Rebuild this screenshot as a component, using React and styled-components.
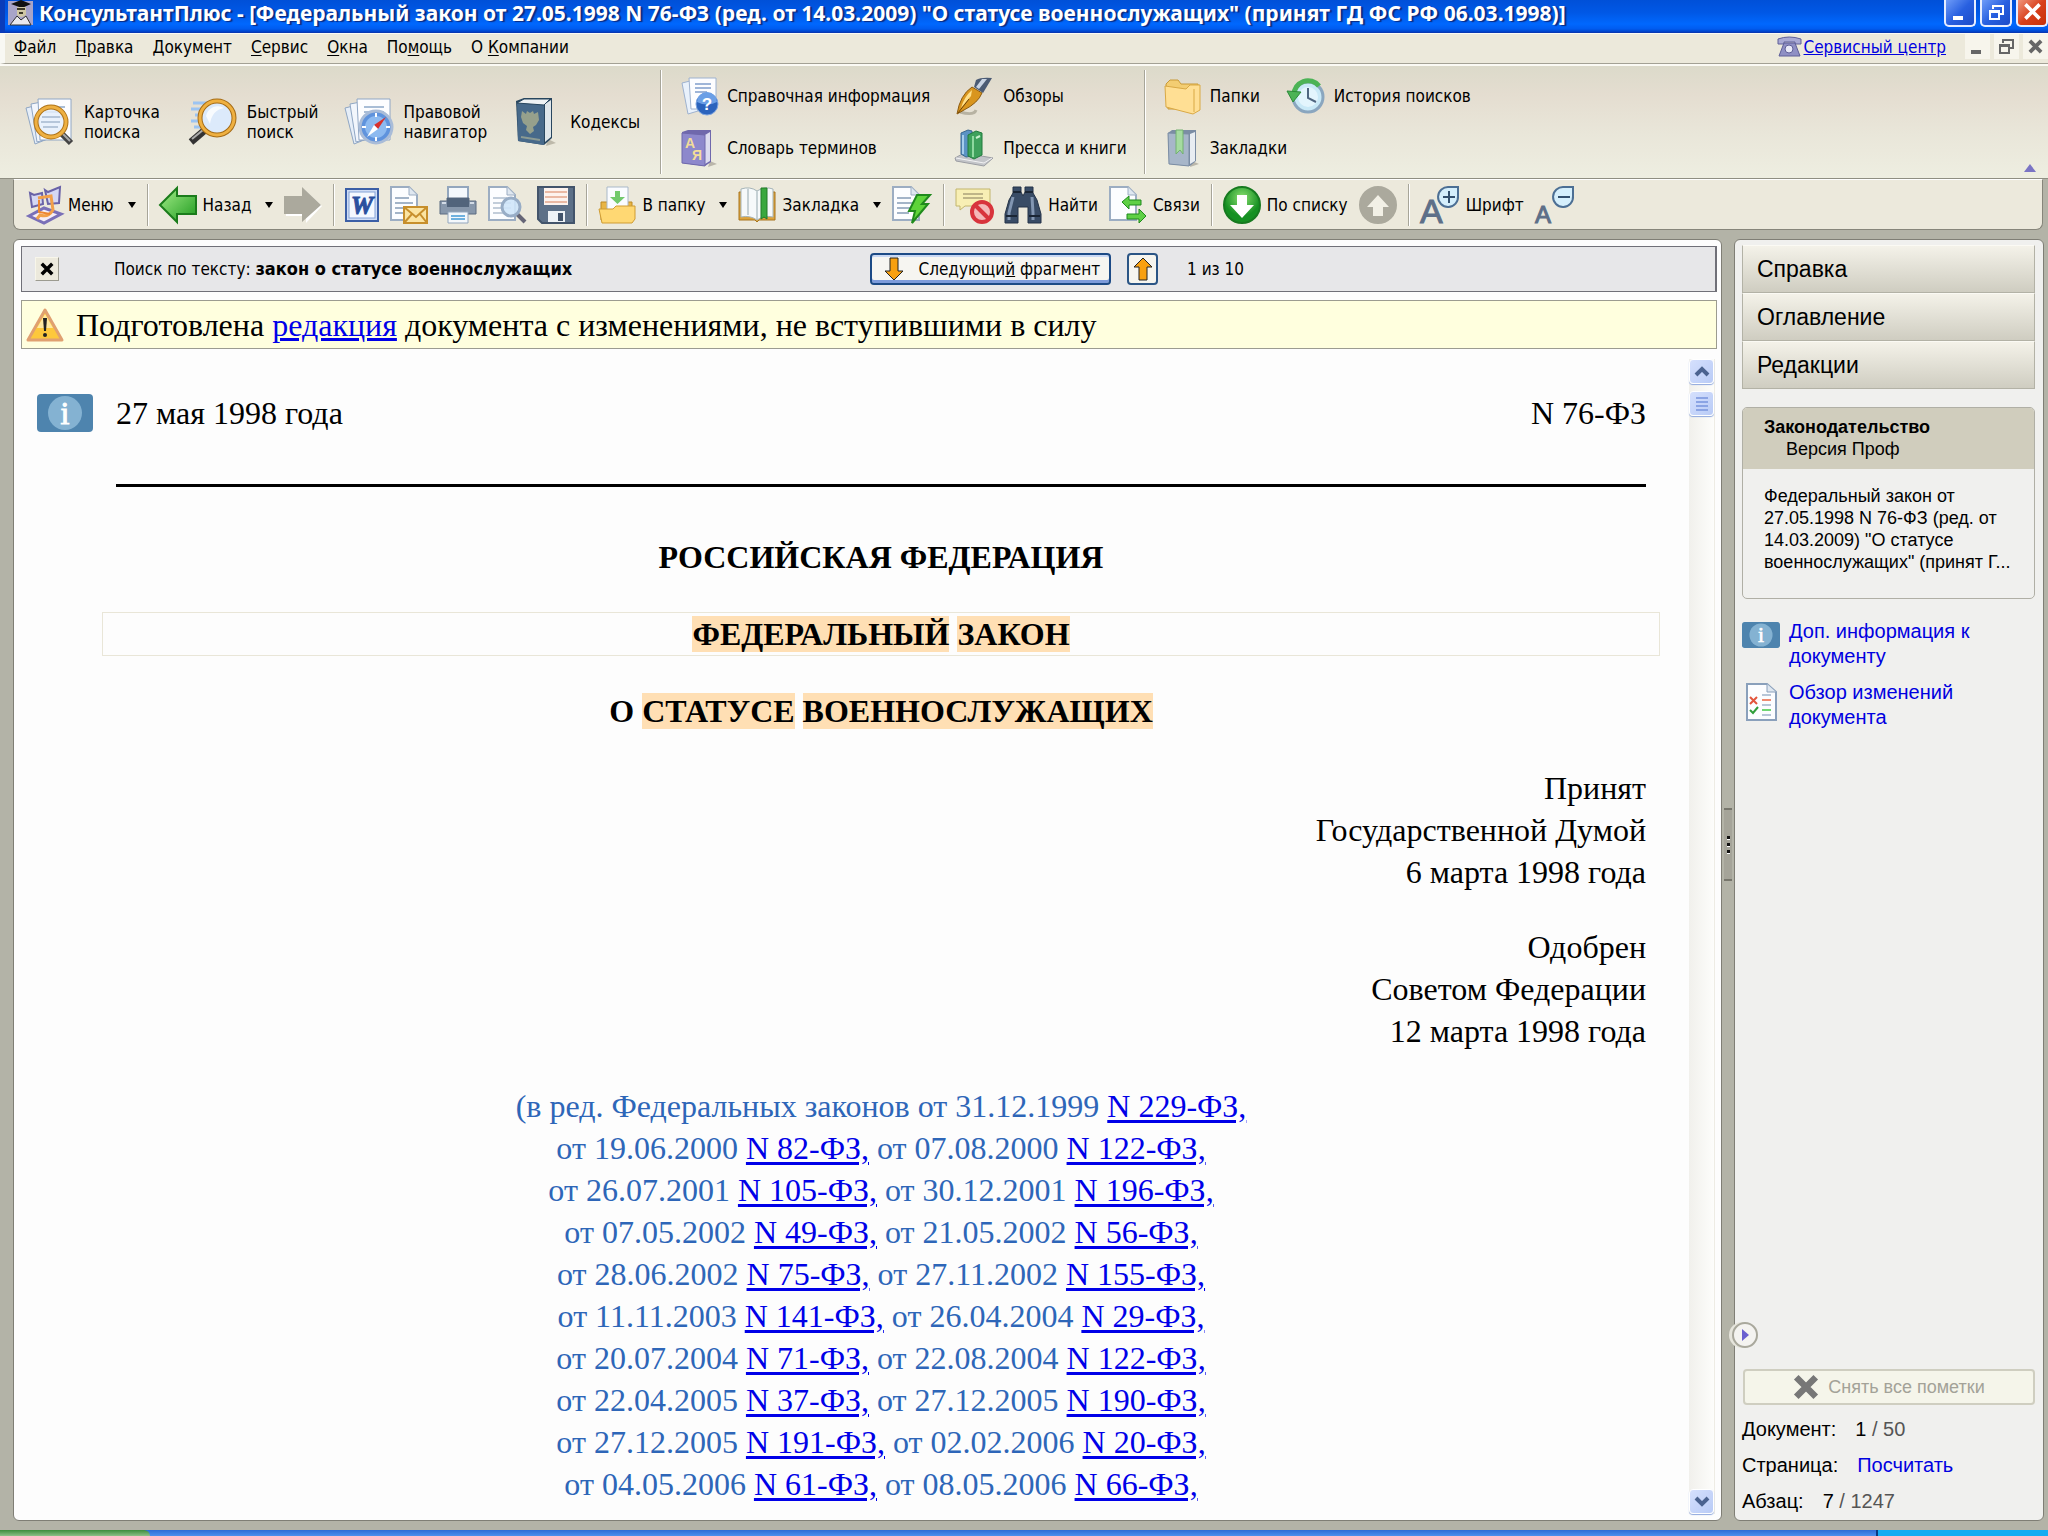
import React from "react";
import styled, { createGlobalStyle } from "styled-components";

const ui = '"DejaVu Sans Condensed", "DejaVu Sans", sans-serif';
const arial = '"Liberation Sans", Arial, sans-serif';
const serif = '"Liberation Serif", "Times New Roman", serif';

const GlobalStyle = createGlobalStyle`
  * { box-sizing: border-box; }
  body { margin: 0; background: #b3b3a7; }
  button { margin: 0; padding: 0; border: 0; background: none; color: inherit; font: inherit; cursor: pointer; }
  svg { display: block; flex: none; overflow: visible; }
`;

/* ---------- window frame ---------- */

const Window = styled.div`
  display: flex;
  flex-direction: column;
  height: 100vh;
  min-width: 1600px;
  overflow: hidden;
  font: 17px/20px ${ui};
  color: #000;
`;

const TitleBar = styled.header`
  display: flex;
  align-items: center;
  height: 33px;
  flex: none;
  padding: 0 0 6px 3px;
  border-left: 5px solid #0a3cba;
  border-bottom: 1px solid #0838b4;
  background: linear-gradient(#0050d8 0, #0058e6 40%, #0068fe 75%, #005cf0 90%, #0040c4 100%);
`;

const Title = styled.h1`
  margin: 0 auto 0 6px;
  font: bold 21px/26px "Noto Sans", "Open Sans", sans-serif;
  color: #fff;
  text-shadow: 2px 1px 1px #0a2a80;
  white-space: nowrap;
`;

const CaptionButton = styled.button`
  display: flex;
  align-items: flex-end;
  justify-content: center;
  width: 32px;
  height: 27px;
  margin-left: 4px;
  padding-bottom: 4px;
  border: 2px solid #e6edff;
  border-top: 0;
  border-radius: 0 0 5px 5px;
  background: ${(p) => (p.$close ? "linear-gradient(135deg, #f0957c, #d8401c 50%, #c83008)" : "linear-gradient(135deg, #6f9cf8, #2860e0 50%, #1c4cc8)")};
`;

const MenuBar = styled.nav`
  display: flex;
  align-items: center;
  height: 31px;
  flex: none;
  padding: 0 0 4px 9px;
  gap: 19px;
  background: #ece9db;
  border-left: 5px solid #f8f8f3;
  border-top: 1px solid #fbfaf4;
  border-bottom: 1px solid #a3a195;
`;

const MenuItem = styled.button`
  line-height: 20px;
  u { text-underline-offset: 2px; }
`;

const ServiceLink = styled.a`
  display: flex;
  align-items: center;
  gap: 2px;
  margin-left: auto;
  color: #0000e0;
`;

const ChildButtons = styled.div`
  display: flex;
  gap: 4px;
`;

const ChildButton = styled.button`
  display: flex;
  align-items: center;
  justify-content: center;
  width: 25px;
  height: 25px;
  background: #f7f5ec;
`;

/* ---------- ribbon ---------- */

const Ribbon = styled.section`
  display: flex;
  align-items: stretch;
  height: 115px;
  flex: none;
  padding: 4px 12px 4px 26px;
  border-top: 2px solid #fbfaf4;
  border-bottom: 1px solid #8f8e82;
  background: linear-gradient(#dcdaca, #e4ddd0 25%, #e9e6d9 60%, #eeeee1);
`;

const BigGroup = styled.div`
  display: flex;
  align-items: center;
  gap: 27px;
  padding-right: 20px;
  border-right: 1px solid #a7a599;
  box-shadow: 1px 0 0 #fff;
`;

const BigButton = styled.button`
  display: flex;
  align-items: center;
  gap: 10px;
  text-align: left;
  white-space: pre-line;
`;

const SmallGroup = styled.div`
  display: grid;
  grid-template-columns: ${(p) => p.$columns};
  grid-template-rows: 52px 52px;
  padding: 0 ${(p) => p.$end}px 0 19px;
  border-right: ${(p) => (p.$last ? "0" : "1px solid #a7a599")};
  box-shadow: ${(p) => (p.$last ? "none" : "1px 0 0 #fff")};
`;

const SmallButton = styled.button`
  display: flex;
  align-items: center;
  gap: 9px;
  white-space: nowrap;
`;

const Collapse = styled.button`
  align-self: flex-end;
  margin-left: auto;
  padding-bottom: 2px;
`;

/* ---------- toolbar ---------- */

const ToolBar = styled.div`
  display: flex;
  align-items: center;
  gap: 11px;
  height: 51px;
  flex: none;
  margin: 0 5px 9px 13px;
  padding: 0 14px;
  border: 1px solid #86857a;
  border-top: 1px solid #fff;
  border-radius: 0 0 7px 7px;
  background: #ece9dc;
`;

const ToolButton = styled.button`
  display: flex;
  align-items: center;
  gap: 6px;
  white-space: nowrap;
`;

const Caret = styled.span`
  margin-left: 8px;
  border: 4px solid transparent;
  border-top: 6px solid #000;
  border-bottom: 0;
`;

const Divider = styled.span`
  width: 1px;
  height: 42px;
  background: #a7a599;
  box-shadow: 1px 0 0 #fff;
`;

/* ---------- workspace ---------- */

const Workspace = styled.main`
  display: grid;
  grid-template-columns: minmax(0, 1fr) 12px 310px;
  flex: 1;
  min-height: 0;
  margin: 0 4px 9px 13px;
`;

const Panel = styled.section`
  display: flex;
  flex-direction: column;
  min-height: 0;
  border: 1px solid #7f7e75;
  border-radius: 6px;
  background: #fdfdfd;
  padding: 6px 4px 6px 7px;
`;

const SearchBar = styled.div`
  display: flex;
  align-items: center;
  height: 46px;
  flex: none;
  border: 1px solid #707078;
  border-right-width: 2px;
  background: #e7e7e9;
`;

const SearchQuery = styled.div`
  display: flex;
  align-items: center;
  width: 50%;
  padding-left: 13px;
  gap: 55px;
  b { font-size: 18px; }
`;

const CloseButton = styled.button`
  display: flex;
  align-items: center;
  justify-content: center;
  width: 24px;
  height: 24px;
  border: 1px solid #f8f6ea;
  border-right-color: #9c9b90;
  border-bottom-color: #9c9b90;
  background: #ece9dc;
`;

const NextButton = styled.button`
  display: flex;
  align-items: center;
  gap: 15px;
  height: 32px;
  margin-left: 1px;
  padding: 0 9px 0 12px;
  border: 2px solid #1c4a86;
  border-radius: 4px;
  background: #f6f5f1;
  box-shadow: inset 0 -3px 0 #7d9bdb, inset 0 2px 0 #c9d8f4;
  white-space: nowrap;
`;

const PrevButton = styled.button`
  display: flex;
  align-items: center;
  justify-content: center;
  width: 31px;
  height: 32px;
  margin: 0 29px 0 16px;
  border: 2px solid #2b5585;
  border-radius: 4px;
  background: #f6f5ef;
`;

const Notice = styled.div`
  display: flex;
  align-items: center;
  gap: 12px;
  height: 49px;
  flex: none;
  margin-top: 8px;
  padding-left: 4px;
  border: 1px solid #9c9c90;
  background: #ffffde;
  font: 32px/42px ${serif};
  a { color: #0000e8; }
`;

const Reader = styled.div`
  display: flex;
  flex: 1;
  min-height: 0;
  margin-top: 10px;
`;

const Doc = styled.article`
  flex: 1;
  min-width: 0;
  overflow: hidden;
  padding: 33px 43px 0 16px;
  font: 32px/42px ${serif};
`;

const DocHead = styled.div`
  display: flex;
  align-items: center;
  gap: 23px;
`;

const DocNumber = styled.span`
  margin-left: auto;
`;

const Body = styled.div`
  padding-left: 79px;
`;

const Rule = styled.hr`
  margin: 50px 0 49px;
  border: 0;
  border-top: 3px solid #000;
`;

const Heading = styled.h2`
  margin: 0 -13px 35px;
  font: bold 32px/42px ${serif};
  text-align: center;
  outline: ${(p) => (p.$framed ? "1px solid #e9e6d8" : "none")};
  mark { background: #ffdfb4; color: inherit; }
`;

const Adopted = styled.p`
  margin: 0 0 33px;
  text-align: right;
`;

const Amendments = styled.p`
  margin: 0;
  text-align: center;
  color: #2e66b8;
  white-space: nowrap;
  a { color: #0000e8; text-underline-offset: 3px; }
`;

const ScrollTrack = styled.div`
  display: flex;
  flex-direction: column;
  width: 26px;
  gap: 7px;
  margin-right: 2px;
  background: linear-gradient(90deg, #f1f0ec, #fdfdfb);
  border-right: 1px solid #eeece4;
`;

const ScrollButton = styled.button`
  display: flex;
  align-items: center;
  justify-content: center;
  width: 25px;
  height: 25px;
  border: 1px solid #fff;
  border-radius: 4px;
  background: linear-gradient(135deg, #d5e0fd, #b9cbf6);
  box-shadow: 0 1px 1px #8fa8dd;
  &:last-child { margin-top: auto; }
`;

const Splitter = styled.div`
  display: flex;
  flex-direction: column;
  align-items: center;
  justify-content: center;
  position: relative;
`;

const Grip = styled.div`
  display: flex;
  flex-direction: column;
  align-items: center;
  justify-content: center;
  gap: 4px;
  width: 8px;
  height: 73px;
  margin-bottom: 72px;
  border-top: 2px solid #77766c;
  border-bottom: 2px solid #77766c;
  background: #a5a499;
  i { width: 3px; height: 3px; background: #111; box-shadow: 0 1px 0 #fff; }
`;

const FoldButton = styled.button`
  position: absolute;
  left: 10px;
  bottom: 173px;
  z-index: 1;
  display: flex;
  align-items: center;
  justify-content: center;
  width: 26px;
  height: 26px;
  border: 2px solid #a9a89c;
  border-radius: 50%;
  background: #f4f3f0;
  box-shadow: -3px 0 0 #e6e5dc;
`;

/* ---------- side panel ---------- */

const Side = styled.aside`
  display: flex;
  flex-direction: column;
  border: 1px solid #7f7e75;
  border-radius: 6px;
  background: #f0f0ee;
  padding: 5px 8px 1px 7px;
  font-family: ${arial};
`;

const SideTab = styled.button`
  height: 48px;
  padding-left: 14px;
  border: 1px solid #b3b2a6;
  border-top-color: #fbfaf4;
  background: linear-gradient(#f4f2e9, #cfcdc1);
  font: 23px/28px ${arial};
  text-align: left;
`;

const InfoCard = styled.section`
  height: 192px;
  margin: 18px 0 20px;
  border: 1px solid #b0afa5;
  border-radius: 5px;
  overflow: hidden;
  font: 18px/22px ${arial};
`;

const InfoCardHead = styled.div`
  padding: 8px 21px 9px;
  background: #d0cdbd;
  h3 { margin: 0; font: bold 18px/22px ${arial}; }
  p { margin: 0; padding-left: 22px; }
`;

const InfoCardText = styled.p`
  margin: 0;
  padding: 16px 0 0 21px;
  white-space: pre-line;
`;

const SideLink = styled.a`
  display: grid;
  grid-template-columns: 38px 1fr;
  gap: 9px;
  align-items: start;
  justify-items: center;
  margin-bottom: 11px;
  font: 20px/25px ${arial};
  color: #0000e0;
  text-decoration: none;
  white-space: pre-line;
  svg { margin-top: 3px; }
  span { justify-self: start; }
`;

const ClearMarks = styled.button`
  display: flex;
  align-items: center;
  justify-content: center;
  gap: 9px;
  height: 36px;
  margin: auto 0 6px 1px;
  border: 2px solid #cfcec0;
  border-radius: 4px;
  background: #f5f5ea;
  font: 18px/24px ${arial};
  color: #a3a298;
`;

const Counter = styled.div`
  display: flex;
  align-items: center;
  gap: 19px;
  height: 36px;
  font: 20px/24px ${arial};
  a { color: #0000e0; text-decoration: none; }
  span span { color: #555; }
`;

const TaskBar = styled.footer`
  display: flex;
  justify-content: space-between;
  height: 6px;
  flex: none;
  background: linear-gradient(#2c6cd4, #4a90ee);
`;

const Start = styled.div`
  width: 150px;
  border-radius: 0 6px 0 0;
  background: linear-gradient(#3c8c3c, #8cc088);
`;

const Tray = styled.div`
  width: 172px;
  border-left: 2px solid #0a3a80;
  background: #14acf2;
`;

/* ---------- icons ---------- */

const Svg = ({ w = 38, h = 38, box = "0 0 38 38", children }) => (
  <svg width={w} height={h} viewBox={box} aria-hidden="true">{children}</svg>
);

const Sheets = () => (
  <g stroke="#8fa6c4">
    <path d="M0 10 L16 6 L24 40 L9 46 Z" fill="#e6eef8" />
    <path d="M5 6 L21 3 L25 40 L11 44 Z" fill="#f2f6fc" />
    <path d="M12 1 H45 V42 H14 Z" fill="#fdfdff" />
    <path d="M19 9h20M19 14h20M19 19h20" stroke="#a9bdd6" strokeWidth="2" />
  </g>
);

const CardIcon = () => (
  <Svg w={48} h={48} box="0 0 48 48">
    <Sheets />
    <path d="M34 34 L45 45" stroke="#444" strokeWidth="6" />
    <path d="M35 34 L44 43" stroke="#aaa" strokeWidth="2" />
    <circle cx="25" cy="24" r="15" fill="#e5effb" fillOpacity=".85" stroke="#b0741a" strokeWidth="5" />
    <circle cx="25" cy="24" r="15" fill="none" stroke="#eeb042" strokeWidth="3" />
    <path d="M16 19h18M15 24h19M17 29h15" stroke="#b6c6da" strokeWidth="2" />
  </Svg>
);

const FastIcon = () => (
  <Svg w={50} h={48} box="0 0 50 48">
    <path d="M6 5h22M4 11h22M8 17h14M4 23h14M7 29h14" stroke="#9cc4f2" strokeWidth="3" />
    <path d="M18 32 L4 44" stroke="#333" strokeWidth="7" />
    <path d="M16 32 L5 41" stroke="#aaa" strokeWidth="2" />
    <circle cx="30" cy="20" r="17" fill="#dceafb" stroke="#a56c16" strokeWidth="5" />
    <circle cx="30" cy="20" r="17" fill="none" stroke="#efb040" strokeWidth="3" />
    <path d="M19 18 a12 12 0 0 1 18 -8 q-12 2 -14 16z" fill="#fff" opacity=".8" />
  </Svg>
);

const NavIcon = () => (
  <Svg w={48} h={48} box="0 0 48 48">
    <Sheets />
    <circle cx="31" cy="29" r="16" fill="#5f93dd" stroke="#a9bcd8" strokeWidth="3" />
    <circle cx="31" cy="29" r="11" fill="#8dbaf0" />
    <path d="M31 15v4M31 39v4M17 29h4M41 29h4" stroke="#fff" strokeWidth="2" />
    <path d="M41 19 L33 31 L29 27Z" fill="#d8302c" />
    <path d="M22 39 L33 31 L29 27Z" fill="#fff" />
  </Svg>
);

const CodexIcon = () => (
  <Svg w={46} h={50} box="0 0 46 50">
    <path d="M34 42 L42 46 L32 49Z" fill="#bdb9aa" />
    <path d="M2 4 L10 1 H38 V41 L30 48 L4 44 Z" fill="#28465f" />
    <path d="M31 7 L37 3 V40 L31 45Z" fill="#dfe6ea" />
    <path d="M3 6 L30 8 V48 L4 44Z" fill="#47698a" />
    <path d="M8 14 l4 3 1-3 3 2 3-2 1 3 4-2 1 8 -3 5 -3 2 1 4 -4 3 -4-4 1-4 -4-3 -2-6Z" fill="#96a08c" />
    <path d="M7 40 L26 43" stroke="#8b9a93" strokeWidth="2" />
    <path d="M3 6 L10 2 H36 L30 8Z" fill="#eef2f4" stroke="#28465f" />
  </Svg>
);

const HelpDocIcon = () => (
  <Svg>
    <path d="M2 6 L14 3 L18 34 L8 37Z" fill="#e9f1fb" stroke="#9eb2cf" />
    <path d="M9 1H36V32H11Z" fill="#fdfdff" stroke="#9eb2cf" />
    <path d="M15 7h16M15 11h16M15 15h12" stroke="#9fb5d8" strokeWidth="2" />
    <circle cx="27" cy="27" r="11" fill="#2b63bd" stroke="#7ea5e0" />
    <path d="M17 25a10 10 0 0 1 20 0q-10 5-20 0" fill="#6b9fe6" />
    <text x="27" y="33" fontFamily="Liberation Sans" fontWeight="bold" fontSize="17" textAnchor="middle" fill="#fff">?</text>
  </Svg>
);

const DictIcon = () => (
  <Svg>
    <path d="M30 32 L37 35 L28 38Z" fill="#bab6aa" />
    <path d="M2 3 L8 1 H31 V33 L25 37 L2 34Z" fill="#6f68ac" />
    <path d="M25 6 L30 3 V32 L25 35Z" fill="#dcdcf0" />
    <path d="M2 4 L25 6 V37 L2 34Z" fill="#8d88cc" stroke="#6f68ac" />
    <text x="5" y="19" fontFamily="Liberation Sans" fontSize="14" fontWeight="bold" fill="#f3dd9a">А</text>
    <text x="12" y="31" fontFamily="Liberation Sans" fontSize="14" fontWeight="bold" fill="#f3dd9a">Я</text>
  </Svg>
);

const PenIcon = () => (
  <Svg w={40} box="0 0 40 38">
    <path d="M6 35 q14 4 16-2" stroke="#b7b2a2" strokeWidth="3" fill="none" />
    <path d="M22 3 Q27 0 38 1 L29 16 L20 10Z" fill="#4b5b74" />
    <path d="M28 2 L33 2 L25 12 L22 10Z" fill="#c9d4e4" />
    <path d="M18 10 L28 16 Q24 26 10 33 L3 37 Q6 18 18 10Z" fill="#d9951e" stroke="#8a5a10" />
    <path d="M18 13 Q10 20 7 31 L17 19Z" fill="#ffe08a" />
    <path d="M4 36 L15 22" stroke="#6c430a" />
  </Svg>
);

const PressIcon = () => (
  <Svg w={40} box="0 0 40 38">
    <path d="M1 29 L10 24 L39 29 L30 37 L2 32Z" fill="#c3c5c9" stroke="#9b9da3" />
    <path d="M2 29 L30 34 L38 29" stroke="#f2f2f4" fill="none" />
    <path d="M7 4 L14 1 L18 2 V27 L12 28 L7 25Z" fill="#5b93c4" stroke="#3a678f" />
    <path d="M9 6V25" stroke="#a6cdeb" strokeWidth="2" />
    <path d="M14 6 L22 2 L28 4 V26 L20 30 L14 27Z" fill="#3ea15c" stroke="#217a3c" />
    <path d="M19 7V28" stroke="#8ed89f" strokeWidth="2" />
    <path d="M22 9 l4-2" stroke="#c9f0ce" strokeWidth="2" />
  </Svg>
);

const FolderIcon = () => (
  <Svg w={37} box="0 0 37 38">
    <path d="M2 7 L6 3 H14 L17 7 H34 V32 L4 32Z" fill="#f3cd72" stroke="#c99a36" />
    <path d="M1 9 L22 12 L26 8 H36 V33 L29 37 L2 30Z" fill="#ffdf94" stroke="#d9a945" />
    <path d="M30 12 V35" stroke="#d9a945" />
  </Svg>
);

const HistoryIcon = () => (
  <Svg>
    <circle cx="21" cy="20" r="15" fill="#c9e9f7" stroke="#8aa6bf" strokeWidth="3" />
    <circle cx="21" cy="20" r="10" fill="#e3f5fd" />
    <path d="M21 11V21L29 25" stroke="#4f6680" strokeWidth="2" fill="none" />
    <path d="M7 18 A14 14 0 0 1 32 9" stroke="#4cb356" strokeWidth="5" fill="none" />
    <path d="M0 14 L14 15 L6 25Z" fill="#4cb356" stroke="#2d8a3a" />
  </Svg>
);

const BookmarksIcon = () => (
  <Svg w={37} box="0 0 37 38">
    <path d="M28 32 L35 35 L26 38Z" fill="#bab6aa" />
    <path d="M4 4 L8 1 H32 V32 L26 37 L5 35Z" fill="#7b8da4" />
    <path d="M4 4 L25 5 V37 L5 35Z" fill="#a7b6c9" stroke="#7b8da4" />
    <path d="M26 5 L31 3 V32 L26 35Z" fill="#e8edf2" />
    <path d="M12 1 H19 V25 L16 21 L12 25Z" fill="#a5dba0" stroke="#72b070" />
  </Svg>
);

const MenuIcon = () => (
  <Svg w={34} box="0 0 34 38">
    <path d="M2 7 L6 9 L14 7 L15 18 L4 21 Z M17 4 L20 6 L32 1 L31 17 L20 18Z" fill="#d5d8f4" stroke="#6a63a8" strokeWidth="2" />
    <path d="M1 30 L16 22 L33 28 L16 37Z" fill="#f6eef6" stroke="#7a70b8" strokeWidth="3" />
    <path d="M10 12 L23 10 L25 24 Q20 32 12 29 L9 33" fill="none" stroke="#f2a04a" strokeWidth="3" />
    <path d="M11 14V26L22 28" fill="none" stroke="#ee8630" strokeWidth="2" />
  </Svg>
);

const BackIcon = () => (
  <Svg>
    <defs><linearGradient id="back" x2="1" y2="1"><stop stopColor="#a5ee8a" /><stop offset="1" stopColor="#1e9a1e" /></linearGradient></defs>
    <path d="M1 19 L18 2 V10 H37 V28 H18 V36Z" fill="url(#back)" stroke="#1b7c1b" strokeWidth="2" />
  </Svg>
);

const ForwardIcon = () => (
  <Svg>
    <path d="M2 12H20V3L38 20L22 37V30H2Z" fill="#fff" />
    <path d="M0 10H18V1L37 19L18 36V28H0Z" fill="#aba99d" />
  </Svg>
);

const WordIcon = () => (
  <Svg w={34} h={34} box="0 0 34 34">
    <rect x="1" y="1" width="32" height="32" fill="#cfdcf5" stroke="#3c5fa6" strokeWidth="2" />
    <rect x="4" y="4" width="26" height="26" fill="#f4f8ff" stroke="#86a3d8" />
    <text x="17" y="26" fontFamily="Liberation Serif" fontWeight="bold" fontStyle="italic" fontSize="25" textAnchor="middle" fill="#2a4f9e" stroke="#2a4f9e">W</text>
  </Svg>
);

const Page = ({ lines = "#a3b4c8" }) => (
  <g>
    <path d="M1 1H19L27 9V34H1Z" fill="#fcfdff" stroke="#9cadc2" strokeWidth="2" />
    <path d="M19 1V9H27" fill="#dfe7f0" stroke="#9cadc2" />
    <path d="M5 12h14M5 17h18M5 22h18M5 27h12" stroke={lines} strokeWidth="2" />
  </g>
);

const MailIcon = () => (
  <Svg>
    <Page />
    <path d="M14 21H37V37H14Z" fill="#fbe4a2" stroke="#c78f2c" strokeWidth="2" />
    <path d="M14 21 L26 31 L37 21M14 37 L22 28M37 37 L30 28" fill="none" stroke="#c78f2c" strokeWidth="2" />
  </Svg>
);

const PrintIcon = () => (
  <Svg>
    <path d="M9 1H29V15H9Z" fill="#f4f8fc" stroke="#93a6bd" strokeWidth="2" />
    <path d="M1 15H8V12H30V15H37V28H1Z" fill="#8797ab" stroke="#5a6b80" />
    <path d="M8 12H30V21H8Z" fill="#52647b" />
    <path d="M3 17H7M31 17H35" stroke="#d2dbe6" strokeWidth="2" />
    <path d="M9 26H29V37H9Z" fill="#f4f8fc" stroke="#93a6bd" />
    <path d="M12 30h14M12 33h14" stroke="#6fb1df" strokeWidth="2" />
  </Svg>
);

const PreviewIcon = () => (
  <Svg>
    <Page lines="#c2cdda" />
    <path d="M29 28 L37 36" stroke="#667" strokeWidth="4" />
    <circle cx="23" cy="21" r="9" fill="#cfe6fa" fillOpacity=".9" stroke="#98adc6" strokeWidth="3" />
  </Svg>
);

const SaveIcon = () => (
  <Svg>
    <path d="M1 1H37V37H5L1 33Z" fill="#5d7088" stroke="#43546b" strokeWidth="2" />
    <path d="M7 2H31V19H7Z" fill="#fdf3ee" />
    <path d="M8 6h22M8 11h22M8 16h22" stroke="#eab9a4" strokeWidth="2" />
    <path d="M11 25H28V36H11Z" fill="#eef2f6" />
    <path d="M21 27H26V35H21Z" fill="#43546b" />
  </Svg>
);

const ToFolderIcon = () => (
  <Svg>
    <path d="M3 16H34V34H3Z" fill="#e8b545" stroke="#bd8a24" />
    <path d="M9 1H30V26H9Z" fill="#fafcff" stroke="#a9b8c9" />
    <path d="M17 5H22V11H27L19.500 18L12 11H17Z" fill="#72c96c" />
    <path d="M1 23H15L18 20H37V33L34 37H4Z" fill="#ffd873" stroke="#cf9c33" />
  </Svg>
);

const BookIcon = () => (
  <Svg>
    <path d="M1 6V34H17L19 36L21 34H37V6Z" fill="#dca33c" stroke="#a8751c" />
    <path d="M3 3Q12 0 19 5Q27 0 35 3V31Q26 29 19 34Q12 29 3 31Z" fill="#f6f9fa" stroke="#a5b4b8" />
    <path d="M19 5V33M10 3V29" stroke="#c5d0d4" strokeWidth="2" />
    <path d="M23 2H29V33L26 31L23 33Z" fill="#3aa83e" stroke="#207a26" />
  </Svg>
);

const FlashDocIcon = () => (
  <Svg w={40} box="0 0 40 38">
    <Page />
    <path d="M25 9H38L30 18H36L20 37L23 25H17Z" fill="#5ed43a" stroke="#1f8a1c" strokeWidth="2" />
  </Svg>
);

const NoteIcon = () => (
  <Svg>
    <path d="M1 3H35V20H10L5 24V20H1Z" fill="#f8efb4" stroke="#c2b56c" />
    <path d="M8 8h20M8 12h20" stroke="#bfb588" strokeWidth="2" />
    <circle cx="27" cy="26" r="10" fill="#f4b8b8" stroke="#d8343c" strokeWidth="4" />
    <path d="M20 19 L34 33" stroke="#d8343c" strokeWidth="4" />
  </Svg>
);

const BinocularsIcon = () => (
  <Svg>
    <path d="M9 1H17V6L19 10L21 6V1H29V7L33 14L37 28V37H24V21H14V37H1V28L5 14L9 7Z" fill="#394c66" stroke="#253348" />
    <path d="M9 11L5 27V34M28 11L29 27V34" stroke="#8296b2" strokeWidth="3" fill="none" />
    <path d="M9 6h8M21 6h8M2 30h11M25 30h11" stroke="#1b2635" strokeWidth="2" />
  </Svg>
);

const LinksIcon = () => (
  <Svg>
    <Page lines="#fcfdff" />
    <path d="M13 16L20 10V14H32V19H20V23Z" fill="#5fd045" stroke="#1f8a1c" />
    <path d="M37 30L30 23V28H18V33H30V37Z" fill="#5fd045" stroke="#1f8a1c" />
  </Svg>
);

const RoundArrow = ({ up }) => (
  <Svg>
    <defs><radialGradient id="green" cy=".3"><stop stopColor="#8be070" /><stop offset="1" stopColor="#159022" /></radialGradient></defs>
    <circle cx="19" cy="19" r="18" fill={up ? "#aba99d" : "url(#green)"} stroke={up ? "#aba99d" : "#177a20"} strokeWidth="2" />
    {up ? <path d="M19 9L30 21H24V30H14V21H8Z" fill="#f2f0e6" /> : <path d="M19 32L7 19H14V9H24V19H31Z" fill="#fff" />}
  </Svg>
);

const FontIcon = ({ small }) => (
  <Svg w={small ? 38 : 40} box={small ? "0 0 38 38" : "0 0 40 38"}>
    <text x="0" y="37" fontFamily="Liberation Sans" fontSize={small ? 24 : 34} fill="#5d6f88" stroke="#5d6f88">A</text>
    <path d="M29 1H38V10A10 10 0 1 1 29 1Z" fill="#d5effc" stroke="#4c6f94" strokeWidth="2" />
    <path d={small ? "M23 11H35" : "M23 11H35M29 5V17"} stroke="#33506e" strokeWidth="2" />
  </Svg>
);

const InfoIcon = ({ w, h }) => (
  <Svg w={w} h={h} box="0 0 56 38">
    <rect width="56" height="38" rx="4" fill="#4e84ae" />
    <circle cx="28" cy="19" r="17" fill="#84b2d2" />
    <text x="28" y="30" fontFamily="Liberation Serif" fontSize="32" textAnchor="middle" fill="#fff" stroke="#fff">i</text>
  </Svg>
);

const ReviewIcon = () => (
  <Svg w={31} h={38} box="0 0 31 38">
    <path d="M1 1H21L30 9V37H1Z" fill="#fcfdff" stroke="#8aa0bb" strokeWidth="2" />
    <path d="M21 1V9H30" fill="#dfe7f0" stroke="#8aa0bb" />
    <path d="M4 14L11 21M11 14L4 21" stroke="#e2553c" strokeWidth="2" />
    <path d="M4 27L7 30L12 24" stroke="#2f9e3a" strokeWidth="2" fill="none" />
    <path d="M16 12h9M16 22h9M16 32h9" stroke="#b7c6d8" strokeWidth="2" />
    <path d="M16 17h9" stroke="#ef8a70" strokeWidth="2" />
    <path d="M16 27h9" stroke="#6fd673" strokeWidth="2" />
  </Svg>
);

const WarningIcon = () => (
  <Svg w={38} h={34} box="0 0 38 34">
    <path d="M19 2L36 32H2Z" fill="#fdc83c" stroke="#e0a070" strokeWidth="3" strokeLinejoin="round" />
    <path d="M19 6L27 20L11 20Z" fill="#ffe9a2" />
    <path d="M17 10H21L20 23H18Z" fill="#222" />
    <circle cx="19" cy="27" r="2" fill="#222" />
  </Svg>
);

const PhoneIcon = () => (
  <Svg w={25} h={20} box="0 0 25 20">
    <path d="M1 2Q12 -2 24 2V7H18V5H7V7H1Z" fill="#a9a9d4" stroke="#5f5f98" />
    <path d="M7 6H18L23 19H2Z" fill="#8f8fc4" stroke="#5f5f98" />
    <circle cx="12" cy="12" r="4" fill="#e9e9f8" stroke="#5f5f98" />
  </Svg>
);

const AppIcon = () => (
  <Svg w={25} h={24} box="0 0 25 24">
    <rect width="25" height="24" fill="#a8a4c8" />
    <path d="M3 3L13 -1L23 3L14 7Z" fill="#111" />
    <path d="M9 6H18V14Q13 18 9 14Z" fill="#cfc7a4" />
    <path d="M9 8H17M11 12H15" stroke="#3c3828" strokeWidth="2" />
    <path d="M2 24L9 15L13 19L18 15L23 24Z" fill="#e9e9ee" stroke="#333" />
  </Svg>
);

const OrangeArrow = ({ up }) => (
  <Svg w={20} h={24} box="0 0 20 24">
    <path d={up ? "M10 1L19 10H14V23H6V10H1Z" : "M10 23L1 14H6V1H14V14H19Z"} fill="#f8a010" stroke="#222" strokeWidth="1" />
  </Svg>
);

const Chevron = ({ down }) => (
  <Svg w={16} h={12} box="0 0 16 12">
    <path d={down ? "M2 2L8 8L14 2" : "M2 9L8 3L14 9"} fill="none" stroke="#4b6390" strokeWidth="4" />
  </Svg>
);

const CrossIcon = ({ size, color, thick }) => (
  <Svg w={size} h={size} box="0 0 16 16">
    <path d="M2 2L14 14M14 2L2 14" stroke={color} strokeWidth={thick} />
  </Svg>
);

const RestoreIcon = ({ color }) => (
  <Svg w={17} h={17} box="0 0 17 17">
    <path d="M5 5V2H15V10H12" fill="none" stroke={color} strokeWidth="2" />
    <path d="M2 7H11V15H2ZM2 8H11" fill="none" stroke={color} strokeWidth="2" />
  </Svg>
);

const MinIcon = ({ color }) => (
  <Svg w={16} h={16} box="0 0 16 16"><path d="M1 13H11" stroke={color} strokeWidth="4" /></Svg>
);

/* ---------- data ---------- */

const amendments = [
  ["(в ред. Федеральных законов от 31.12.1999", "N 229-ФЗ,"],
  ["от 19.06.2000", "N 82-ФЗ,", "от 07.08.2000", "N 122-ФЗ,"],
  ["от 26.07.2001", "N 105-ФЗ,", "от 30.12.2001", "N 196-ФЗ,"],
  ["от 07.05.2002", "N 49-ФЗ,", "от 21.05.2002", "N 56-ФЗ,"],
  ["от 28.06.2002", "N 75-ФЗ,", "от 27.11.2002", "N 155-ФЗ,"],
  ["от 11.11.2003", "N 141-ФЗ,", "от 26.04.2004", "N 29-ФЗ,"],
  ["от 20.07.2004", "N 71-ФЗ,", "от 22.08.2004", "N 122-ФЗ,"],
  ["от 22.04.2005", "N 37-ФЗ,", "от 27.12.2005", "N 190-ФЗ,"],
  ["от 27.12.2005", "N 191-ФЗ,", "от 02.02.2006", "N 20-ФЗ,"],
  ["от 04.05.2006", "N 61-ФЗ,", "от 08.05.2006", "N 66-ФЗ,"],
];

const menus = [
  ["", "Ф", "айл"],
  ["", "П", "равка"],
  ["", "Д", "окумент"],
  ["", "С", "ервис"],
  ["", "О", "кна"],
  ["По", "м", "ощь"],
  ["О ", "К", "омпании"],
];

const Tool = ({ icon, label, caret, hint }) => (
  <ToolButton type="button" aria-label={label ? undefined : hint}>
    {icon}
    {label}
    {caret && <Caret />}
  </ToolButton>
);

const Small = ({ icon, label }) => (
  <SmallButton type="button">{icon}{label}</SmallButton>
);

const Big = ({ icon, label }) => (
  <BigButton type="button">{icon}<span>{label}</span></BigButton>
);

export default function App() {
  return (
    <Window>
      <GlobalStyle />
      <TitleBar>
        <AppIcon />
        <Title>КонсультантПлюс - [Федеральный закон от 27.05.1998 N 76-ФЗ (ред. от 14.03.2009) "О статусе военнослужащих" (принят ГД ФС РФ 06.03.1998)]</Title>
        <CaptionButton type="button" aria-label="Свернуть"><MinIcon color="#fff" /></CaptionButton>
        <CaptionButton type="button" aria-label="Восстановить"><RestoreIcon color="#fff" /></CaptionButton>
        <CaptionButton type="button" aria-label="Закрыть" $close><CrossIcon size={19} color="#fff" thick={3} /></CaptionButton>
      </TitleBar>

      <MenuBar>
        {menus.map(([before, key, after]) => (
          <MenuItem type="button" key={key + after}>{before}<u>{key}</u>{after}</MenuItem>
        ))}
        <ServiceLink href="#service"><PhoneIcon />Сервисный центр</ServiceLink>
        <ChildButtons>
          <ChildButton type="button" aria-label="Свернуть документ"><MinIcon color="#666" /></ChildButton>
          <ChildButton type="button" aria-label="Восстановить документ"><RestoreIcon color="#666" /></ChildButton>
          <ChildButton type="button" aria-label="Закрыть документ"><CrossIcon size={15} color="#666" thick={4} /></ChildButton>
        </ChildButtons>
      </MenuBar>

      <Ribbon>
        <BigGroup>
          <Big icon={<CardIcon />} label={"Карточка\nпоиска"} />
          <Big icon={<FastIcon />} label={"Быстрый\nпоиск"} />
          <Big icon={<NavIcon />} label={"Правовой\nнавигатор"} />
          <Big icon={<CodexIcon />} label="Кодексы" />
        </BigGroup>
        <SmallGroup $columns="274px auto" $end={17}>
          <Small icon={<HelpDocIcon />} label="Справочная информация" />
          <Small icon={<PenIcon />} label="Обзоры" />
          <Small icon={<DictIcon />} label="Словарь терминов" />
          <Small icon={<PressIcon />} label="Пресса и книги" />
        </SmallGroup>
        <SmallGroup $columns="123px auto" $end={0} $last>
          <Small icon={<FolderIcon />} label="Папки" />
          <Small icon={<HistoryIcon />} label="История поисков" />
          <Small icon={<BookmarksIcon />} label="Закладки" />
        </SmallGroup>
        <Collapse type="button" aria-label="Свернуть панель">
          <Svg w={12} h={8} box="0 0 12 8"><path d="M6 0L12 8H0Z" fill="#7a74c4" /></Svg>
        </Collapse>
      </Ribbon>

      <ToolBar>
        <Tool icon={<MenuIcon />} label="Меню" caret />
        <Divider />
        <Tool icon={<BackIcon />} label="Назад" caret />
        <Tool icon={<ForwardIcon />} hint="Вперед" />
        <Divider />
        <Tool icon={<WordIcon />} hint="Экспорт в Word" />
        <Tool icon={<MailIcon />} hint="Отправить по почте" />
        <Tool icon={<PrintIcon />} hint="Печать" />
        <Tool icon={<PreviewIcon />} hint="Просмотр" />
        <Tool icon={<SaveIcon />} hint="Сохранить" />
        <Divider />
        <Tool icon={<ToFolderIcon />} label="В папку" caret />
        <Tool icon={<BookIcon />} label="Закладка" caret />
        <Tool icon={<FlashDocIcon />} hint="На контроль" />
        <Divider />
        <Tool icon={<NoteIcon />} hint="Убрать примечания" />
        <Tool icon={<BinocularsIcon />} label="Найти" />
        <Tool icon={<LinksIcon />} label="Связи" />
        <Divider />
        <Tool icon={<RoundArrow />} label="По списку" />
        <Tool icon={<RoundArrow up />} hint="Вверх по списку" />
        <Divider />
        <Tool icon={<FontIcon />} label="Шрифт" />
        <Tool icon={<FontIcon small />} hint="Уменьшить шрифт" />
      </ToolBar>

      <Workspace>
        <Panel>
          <SearchBar>
            <SearchQuery>
              <CloseButton type="button" aria-label="Закрыть поиск"><CrossIcon size={14} color="#000" thick={4} /></CloseButton>
              <span>Поиск по тексту: <b>закон о статусе военнослужащих</b></span>
            </SearchQuery>
            <NextButton type="button"><OrangeArrow /><span>Следующи<u>й</u> фрагмент</span></NextButton>
            <PrevButton type="button" aria-label="Предыдущий фрагмент"><OrangeArrow up /></PrevButton>
            <span>1 из 10</span>
          </SearchBar>
          <Notice>
            <WarningIcon />
            <span>Подготовлена <a href="#edition">редакция</a> документа с изменениями, не вступившими в силу</span>
          </Notice>
          <Reader>
            <Doc>
              <DocHead>
                <InfoIcon w={56} h={38} />
                <span>27 мая 1998 года</span>
                <DocNumber>N 76-ФЗ</DocNumber>
              </DocHead>
              <Body>
                <Rule />
                <Heading>РОССИЙСКАЯ ФЕДЕРАЦИЯ</Heading>
                <Heading $framed><mark>ФЕДЕРАЛЬНЫЙ</mark> <mark>ЗАКОН</mark></Heading>
                <Heading>О <mark>СТАТУСЕ</mark> <mark>ВОЕННОСЛУЖАЩИХ</mark></Heading>
                <Adopted>Принят<br />Государственной Думой<br />6 марта 1998 года</Adopted>
                <Adopted>Одобрен<br />Советом Федерации<br />12 марта 1998 года</Adopted>
                <Amendments>
                  {amendments.map(([first, link, second, link2]) => (
                    <React.Fragment key={first + link}>
                      {first} <a href="#law">{link}</a>
                      {second && <> {second} <a href="#law">{link2}</a></>}
                      <br />
                    </React.Fragment>
                  ))}
                </Amendments>
              </Body>
            </Doc>
            <ScrollTrack>
              <ScrollButton type="button" aria-label="Прокрутить вверх"><Chevron /></ScrollButton>
              <ScrollButton type="button" aria-label="Ползунок">
                <Svg w={12} h={14} box="0 0 12 14"><path d="M0 1h12M0 5h12M0 9h12M0 13h12" stroke="#8ba4e4" strokeWidth="2" /></Svg>
              </ScrollButton>
              <ScrollButton type="button" aria-label="Прокрутить вниз"><Chevron down /></ScrollButton>
            </ScrollTrack>
          </Reader>
        </Panel>

        <Splitter>
          <Grip><i /><i /><i /></Grip>
          <FoldButton type="button" aria-label="Скрыть правую панель">
            <Svg w={9} h={12} box="0 0 9 12"><path d="M1 0L8 6L1 12Z" fill="#6a60d0" /></Svg>
          </FoldButton>
        </Splitter>

        <Side>
          <SideTab type="button">Справка</SideTab>
          <SideTab type="button">Оглавление</SideTab>
          <SideTab type="button">Редакции</SideTab>
          <InfoCard>
            <InfoCardHead>
              <h3>Законодательство</h3>
              <p>Версия Проф</p>
            </InfoCardHead>
            <InfoCardText>{'Федеральный закон от\n27.05.1998 N 76-ФЗ (ред. от\n14.03.2009) "О статусе\nвоеннослужащих" (принят Г...'}</InfoCardText>
          </InfoCard>
          <SideLink href="#info"><InfoIcon w={38} h={26} /><span>{"Доп. информация к\nдокументу"}</span></SideLink>
          <SideLink href="#review"><ReviewIcon /><span>{"Обзор изменений\nдокумента"}</span></SideLink>
          <ClearMarks type="button" disabled>
            <CrossIcon size={26} color="#777" thick={4} />Снять все пометки
          </ClearMarks>
          <Counter>Документ: <span>1 <span>/ 50</span></span></Counter>
          <Counter>Страница: <a href="#count">Посчитать</a></Counter>
          <Counter>Абзац: <span>7 <span>/ 1247</span></span></Counter>
        </Side>
      </Workspace>

      <TaskBar><Start /><Tray /></TaskBar>
    </Window>
  );
}
